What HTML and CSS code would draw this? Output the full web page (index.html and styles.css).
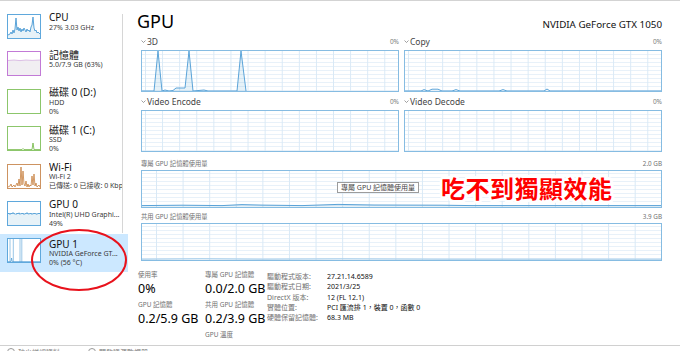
FILE: index.html
```html
<!DOCTYPE html>
<html lang="zh-Hant">
<head>
<meta charset="utf-8">
<title>工作管理員 - GPU</title>
<link rel="stylesheet" href="styles.css">
</head>
<body>
<div class="win">
  <div class="body">
    <nav class="side">
      <div class="item">
        <div class="thumb cpu"><svg viewBox="0 0 32 23" preserveAspectRatio="none"><polygon class="fill-blue" points="0,23 0,20 2,19 3,17 4,19 5,15 6,18 7,14 8,3 9,15 10,12 11,16 12,13 13,17 14,14 15,16 16,13 17,15 18,17 19,14 20,16 21,15 22,17 23,12 24,10 25,2 26,13 27,16 28,15 29,18 30,17 32,19 32,23"/><polyline class="line-blue" points="0,20 2,19 3,17 4,19 5,15 6,18 7,14 8,3 9,15 10,12 11,16 12,13 13,17 14,14 15,16 16,13 17,15 18,17 19,14 20,16 21,15 22,17 23,12 24,10 25,2 26,13 27,16 28,15 29,18 30,17 32,19"/></svg></div>
        <div class="info"><div class="t">CPU</div><div class="s">27% 3.03 GHz</div></div>
      </div>
      <div class="item">
        <div class="thumb mem"><svg viewBox="0 0 32 23" preserveAspectRatio="none"><polygon fill="#f1eef2" points="0,23 0,8.5 6,8 12,8.6 18,8 24,8.4 32,8 32,23"/><polyline fill="none" stroke="#c99ad8" stroke-width="0.6" points="0,8.5 6,8 12,8.6 18,8 24,8.4 32,8"/></svg></div>
        <div class="info"><div class="t">記憶體</div><div class="s">5.0/7.9 GB (63%)</div></div>
      </div>
      <div class="item">
        <div class="thumb disk"></div>
        <div class="info"><div class="t">磁碟 0 (D:)</div><div class="s">HDD</div><div class="s">0%</div></div>
      </div>
      <div class="item">
        <div class="thumb disk"><svg viewBox="0 0 32 23" preserveAspectRatio="none"><polyline fill="none" stroke="#6cb43c" stroke-width="0.8" points="0,22.6 14,22.6 15,21.5 16,22.6 24,22.6 25,16 26,22.6 32,22.6"/></svg></div>
        <div class="info"><div class="t">磁碟 1 (C:)</div><div class="s">SSD</div><div class="s">0%</div></div>
      </div>
      <div class="item">
        <div class="thumb wifi"><svg viewBox="0 0 32 23" preserveAspectRatio="none"><polyline fill="none" stroke="#c77f3d" stroke-width="0.8" points="0,22 2,21 3,19 4,22 6,20 7,22 9,18 10,21 11,14 12,21 13,2 14,20 15,6 16,19 17,21 18,16 19,22 20,19 21,22 22,20 23,21 24,11 25,20 26,9 27,21 28,18 29,22 31,20 32,22"/></svg></div>
        <div class="info"><div class="t">Wi-Fi</div><div class="s">Wi-Fi 2</div><div class="s">已傳送: 0 已接收: 0 Kbps</div></div>
      </div>
      <div class="item">
        <div class="thumb cpu"><svg viewBox="0 0 32 23" preserveAspectRatio="none"><polygon class="fill-blue" points="0,23 0,12 1,11 2,12.5 3,11 4,12 5,10.5 6,12 7,11.5 8,12.5 9,11 10,12 11,10.8 12,12.4 13,11.2 14,12 15,11 16,12.6 17,11.3 18,12 19,10.6 20,12.2 21,11.4 22,12 23,11 24,12.5 25,11.2 26,12 27,11 28,12.4 29,11.6 30,12 31,11 32,12 32,23"/><polyline class="line-blue" points="0,12 1,11 2,12.5 3,11 4,12 5,10.5 6,12 7,11.5 8,12.5 9,11 10,12 11,10.8 12,12.4 13,11.2 14,12 15,11 16,12.6 17,11.3 18,12 19,10.6 20,12.2 21,11.4 22,12 23,11 24,12.5 25,11.2 26,12 27,11 28,12.4 29,11.6 30,12 31,11 32,12"/></svg></div>
        <div class="info"><div class="t">GPU 0</div><div class="s">Intel(R) UHD Graphi...</div><div class="s">49%</div></div>
      </div>
      <div class="item sel">
        <div class="thumb cpu"><svg viewBox="0 0 32 23" preserveAspectRatio="none"><g stroke="#7fb7e0" stroke-width="0.8"><line x1="2" y1="0" x2="2" y2="23"/><line x1="5.3" y1="0" x2="5.3" y2="23"/><line x1="12" y1="0" x2="12" y2="23"/><line x1="13.8" y1="0" x2="13.8" y2="23"/></g><polyline fill="none" stroke="#4b9bd4" stroke-width="0.7" points="0,22.6 3,22.6 3.6,19 4.2,22.6 32,22.6"/></svg></div>
        <div class="info"><div class="t">GPU 1</div><div class="s">NVIDIA GeForce GT...</div><div class="s">0% (56 °C)</div></div>
      </div>
    </nav>

    <main class="main">
      <div class="head">
        <h1 class="title">GPU</h1>
        <div class="model">NVIDIA GeForce GTX 1050</div>
      </div>

      <div class="engines">
        <div class="engine">
          <div class="elabel"><span class="ename"><svg class="chev" viewBox="0 0 5 3"><path d="M0.5 0.5 L2.5 2.5 L4.5 0.5"/></svg>3D</span><span class="pct">0%</span></div>
          <div class="graph"><svg viewBox="0 0 256 40" preserveAspectRatio="none"><polygon class="fill-blue" points="0,40 12,40 16,0 20,40 23,39 27,40 31,39.5 34,37 43,37 47,0 51,40 62,39 66,40 95,40 99,0 104,40"/><polyline class="line-blue" points="0,40 12,40 16,0 20,40 23,39 27,40 31,39.5 34,37 43,37 47,0 51,40 62,39 66,40 95,40 99,0 104,40"/></svg></div>
        </div>
        <div class="engine">
          <div class="elabel"><span class="ename"><svg class="chev" viewBox="0 0 5 3"><path d="M0.5 0.5 L2.5 2.5 L4.5 0.5"/></svg>Copy</span><span class="pct">0%</span></div>
          <div class="graph"><svg viewBox="0 0 256 40" preserveAspectRatio="none"><polyline class="line-blue" points="0,40 16,40 19,38.6 23,40 27,38.2 33,38.2 37,40 47,40 51,38.6 55,40 94,40 98,38.6 102,40 139,40 142,38 145,40 256,40"/></svg></div>
        </div>
        <div class="engine">
          <div class="elabel"><span class="ename"><svg class="chev" viewBox="0 0 5 3"><path d="M0.5 0.5 L2.5 2.5 L4.5 0.5"/></svg>Video Encode</span><span class="pct">0%</span></div>
          <div class="graph"></div>
        </div>
        <div class="engine">
          <div class="elabel"><span class="ename"><svg class="chev" viewBox="0 0 5 3"><path d="M0.5 0.5 L2.5 2.5 L4.5 0.5"/></svg>Video Decode</span><span class="pct">0%</span></div>
          <div class="graph"></div>
        </div>
      </div>

      <div class="memblock">
        <div class="mlabel"><span>專屬 GPU 記憶體使用量</span><span>2.0 GB</span></div>
        <div class="graph memg"><svg viewBox="0 0 519 36" preserveAspectRatio="none"><polygon class="fill-blue" points="0,36 0,34.6 40,34.2 80,34.6 100,33.6 120,34.1 160,34.6 196,33.4 232,34 300,34.2 330,34.6 519,34.6 519,36"/><polyline class="line-blue" points="0,34.6 40,34.2 80,34.6 100,33.6 120,34.1 160,34.6 196,33.4 232,34 300,34.2 330,34.6 519,34.6"/></svg></div>
      </div>
      <div class="memblock">
        <div class="mlabel"><span>共用 GPU 記憶體使用量</span><span>3.9 GB</span></div>
        <div class="graph memg"><svg viewBox="0 0 519 36" preserveAspectRatio="none"><polyline class="line-blue faint" points="0,35.2 60,34.8 120,35.2 200,34.9 300,35.2 519,35.2"/></svg></div>
      </div>

      <div class="stats">
        <div class="col c1">
          <div class="lab">使用率</div>
          <div class="val">0%</div>
          <div class="lab">GPU 記憶體</div>
          <div class="val">0.2/5.9 GB</div>
        </div>
        <div class="col c2">
          <div class="lab">專屬 GPU 記憶體</div>
          <div class="val">0.0/2.0 GB</div>
          <div class="lab">共用 GPU 記憶體</div>
          <div class="val">0.2/3.9 GB</div>
          <div class="lab">GPU 溫度</div>
        </div>
        <div class="props">
          <span class="pk">驅動程式版本:</span><span class="pv">27.21.14.6589</span>
          <span class="pk">驅動程式日期:</span><span class="pv">2021/3/25</span>
          <span class="pk">DirectX 版本:</span><span class="pv">12 (FL 12.1)</span>
          <span class="pk">實體位置:</span><span class="pv">PCI 匯流排 1，裝置 0，函數 0</span>
          <span class="pk">硬體保留記憶體:</span><span class="pv">68.3 MB</span>
        </div>
      </div>
    </main>
  </div>

  <div class="foot"><span class="fi"></span><span class="ft">較少詳細資料</span><span class="fi"></span><span class="ft">開啟資源監視器</span></div>

  <div class="scrollbar"></div>
  <div class="tip">專屬 GPU 記憶體使用量</div>
  <div class="note">吃不到獨顯效能</div>
  <div class="ring"></div>
</div>
</body>
</html>
```

FILE: styles.css
```css
* { box-sizing: border-box; margin: 0; padding: 0; }
html, body { width: 680px; height: 351px; overflow: hidden; background: #fff; }
body { font-family: "Noto Sans", "Noto Sans CJK TC", sans-serif; color: #000; }

.win { position: relative; width: 680px; height: 351px; border-top: 1px solid #d3d3d3; display: flex; flex-direction: column; }
.body { display: flex; flex: 1; min-height: 0; }

/* sidebar */
.side { width: 128px; flex: none; padding-top: 9px; }
.item { display: flex; align-items: flex-start; height: 37.4px; padding: 4px 5px 0 7px; }
.item.sel { background: #cce8ff; }
.thumb { width: 34px; height: 25px; flex: none; margin-right: 8px; border: 1px solid #5fa8dc; background: #fff; }
.thumb svg { display: block; width: 32px; height: 23px; }
.thumb.mem { border-color: #c27ad6; }
.thumb.disk { border-color: #8cc66b; }
.thumb.wifi { border-color: #cd9361; }
.info { flex: 1; min-width: 0; overflow-x: clip; overflow-y: visible; white-space: nowrap; margin-top: -1.6px; }
.t { font-size: 10px; line-height: 10.4px; color: #111; }
.s { font-size: 7px; line-height: 9px; color: #3a3a3a; }
.sel .info { margin-top: 0.5px; }

.fill-blue { fill: rgba(17, 125, 187, 0.1); }
.line-blue { fill: none; stroke: #5aa3d8; stroke-width: 1; vector-effect: non-scaling-stroke; }
.line-blue.faint { stroke: #9cc8e8; }

/* main */
.main { flex: 1; min-width: 0; padding: 0 18px 0 13px; }
.head { display: flex; justify-content: space-between; align-items: baseline; margin-top: 9px; }
.title { font-size: 18px; font-weight: 400; line-height: 22px; margin-left: -4px; }
.model { font-size: 9.8px; color: #111; }

.engines { display: grid; grid-template-columns: 1fr 1fr; column-gap: 5px; row-gap: 3px; margin-top: 3px; }
.elabel { display: flex; justify-content: space-between; align-items: center; height: 12px; margin-bottom: 3px; }
.ename { display: flex; align-items: center; gap: 1px; font-size: 8.5px; color: #444; }
.chev { width: 5px; height: 3px; }
.chev path { fill: none; stroke: #777; stroke-width: 0.7; }
.pct { font-size: 6.5px; color: #808080; }

.graph { position: relative; height: 42px; border: 1px solid #86bce2; background-color: #fff;
  background-image: linear-gradient(to right, #d9e9f6 1px, transparent 1px), linear-gradient(to bottom, #e8f1f9 1px, transparent 1px);
  background-size: 17.1px 100%, 100% 4px; background-position: 3px 0, 0 3px; }
.graph svg { position: absolute; inset: 0; width: 100%; height: 100%; display: block; }
.graph.memg { height: 38px; background-size: 26.6px 100%, 100% 4px; background-position: 14px 0, 0 2px; }

.memblock { margin-top: 5px; }
.memblock + .memblock { margin-top: 2px; }
.mlabel { display: flex; justify-content: space-between; align-items: center; height: 12px; margin-bottom: 1px; font-size: 6.3px; color: #707070; }

.stats { display: flex; margin-top: 9px; margin-left: -3px; }
.col.c1 { width: 67px; }
.col.c2 { width: 62px; }
.lab { font-size: 6.5px; line-height: 10px; color: #707070; white-space: nowrap; }
.val { font-size: 12.5px; line-height: 18px; margin-bottom: 2px; white-space: nowrap; }
.props { display: grid; grid-template-columns: 60px auto; grid-auto-rows: 10.3px; padding-top: 2px; font-size: 7px; line-height: 10.3px; white-space: nowrap; }
.pk { color: #707070; }
.pv { color: #111; }

/* footer */
.foot { flex: none; height: 6px; border-top: 1px solid #d0d0d0; overflow: hidden; display: flex; align-items: flex-start; padding: 2px 0 0 7px; font-size: 7px; line-height: 9px; color: #777; }
.fi { width: 8px; height: 8px; border: 1px solid #999; border-radius: 50%; margin-right: 3px; }
.ft { margin-right: 28px; }

/* overlays */
.scrollbar { position: absolute; left: 122px; top: 13px; width: 1px; height: 219px; background: #d6d6d6; }
.tip { position: absolute; left: 337px; top: 181px; height: 11px; padding: 0 3px; border: 1px solid #9c9c9c; background: #fff; font-size: 7px; line-height: 9px; color: #444; white-space: nowrap; }
.note { position: absolute; left: 441px; top: 174px; font-family: "Noto Sans CJK TC", sans-serif; font-size: 24px; font-weight: 700; line-height: 26px; letter-spacing: 0.5px; color: #ff0000; white-space: nowrap;
  text-shadow: 2.8px 0 0 #fff, -2.8px 0 0 #fff, 0 2.8px 0 #fff, 0 -2.8px 0 #fff,
    2px 2px 0 #fff, -2px 2px 0 #fff, 2px -2px 0 #fff, -2px -2px 0 #fff,
    2.6px 1.1px 0 #fff, -2.6px 1.1px 0 #fff, 2.6px -1.1px 0 #fff, -2.6px -1.1px 0 #fff,
    1.1px 2.6px 0 #fff, -1.1px 2.6px 0 #fff, 1.1px -2.6px 0 #fff, -1.1px -2.6px 0 #fff; }
.ring { position: absolute; left: 31px; top: 228px; width: 96px; height: 62px; border: 2px solid #e8121c; border-radius: 50%; }
```
